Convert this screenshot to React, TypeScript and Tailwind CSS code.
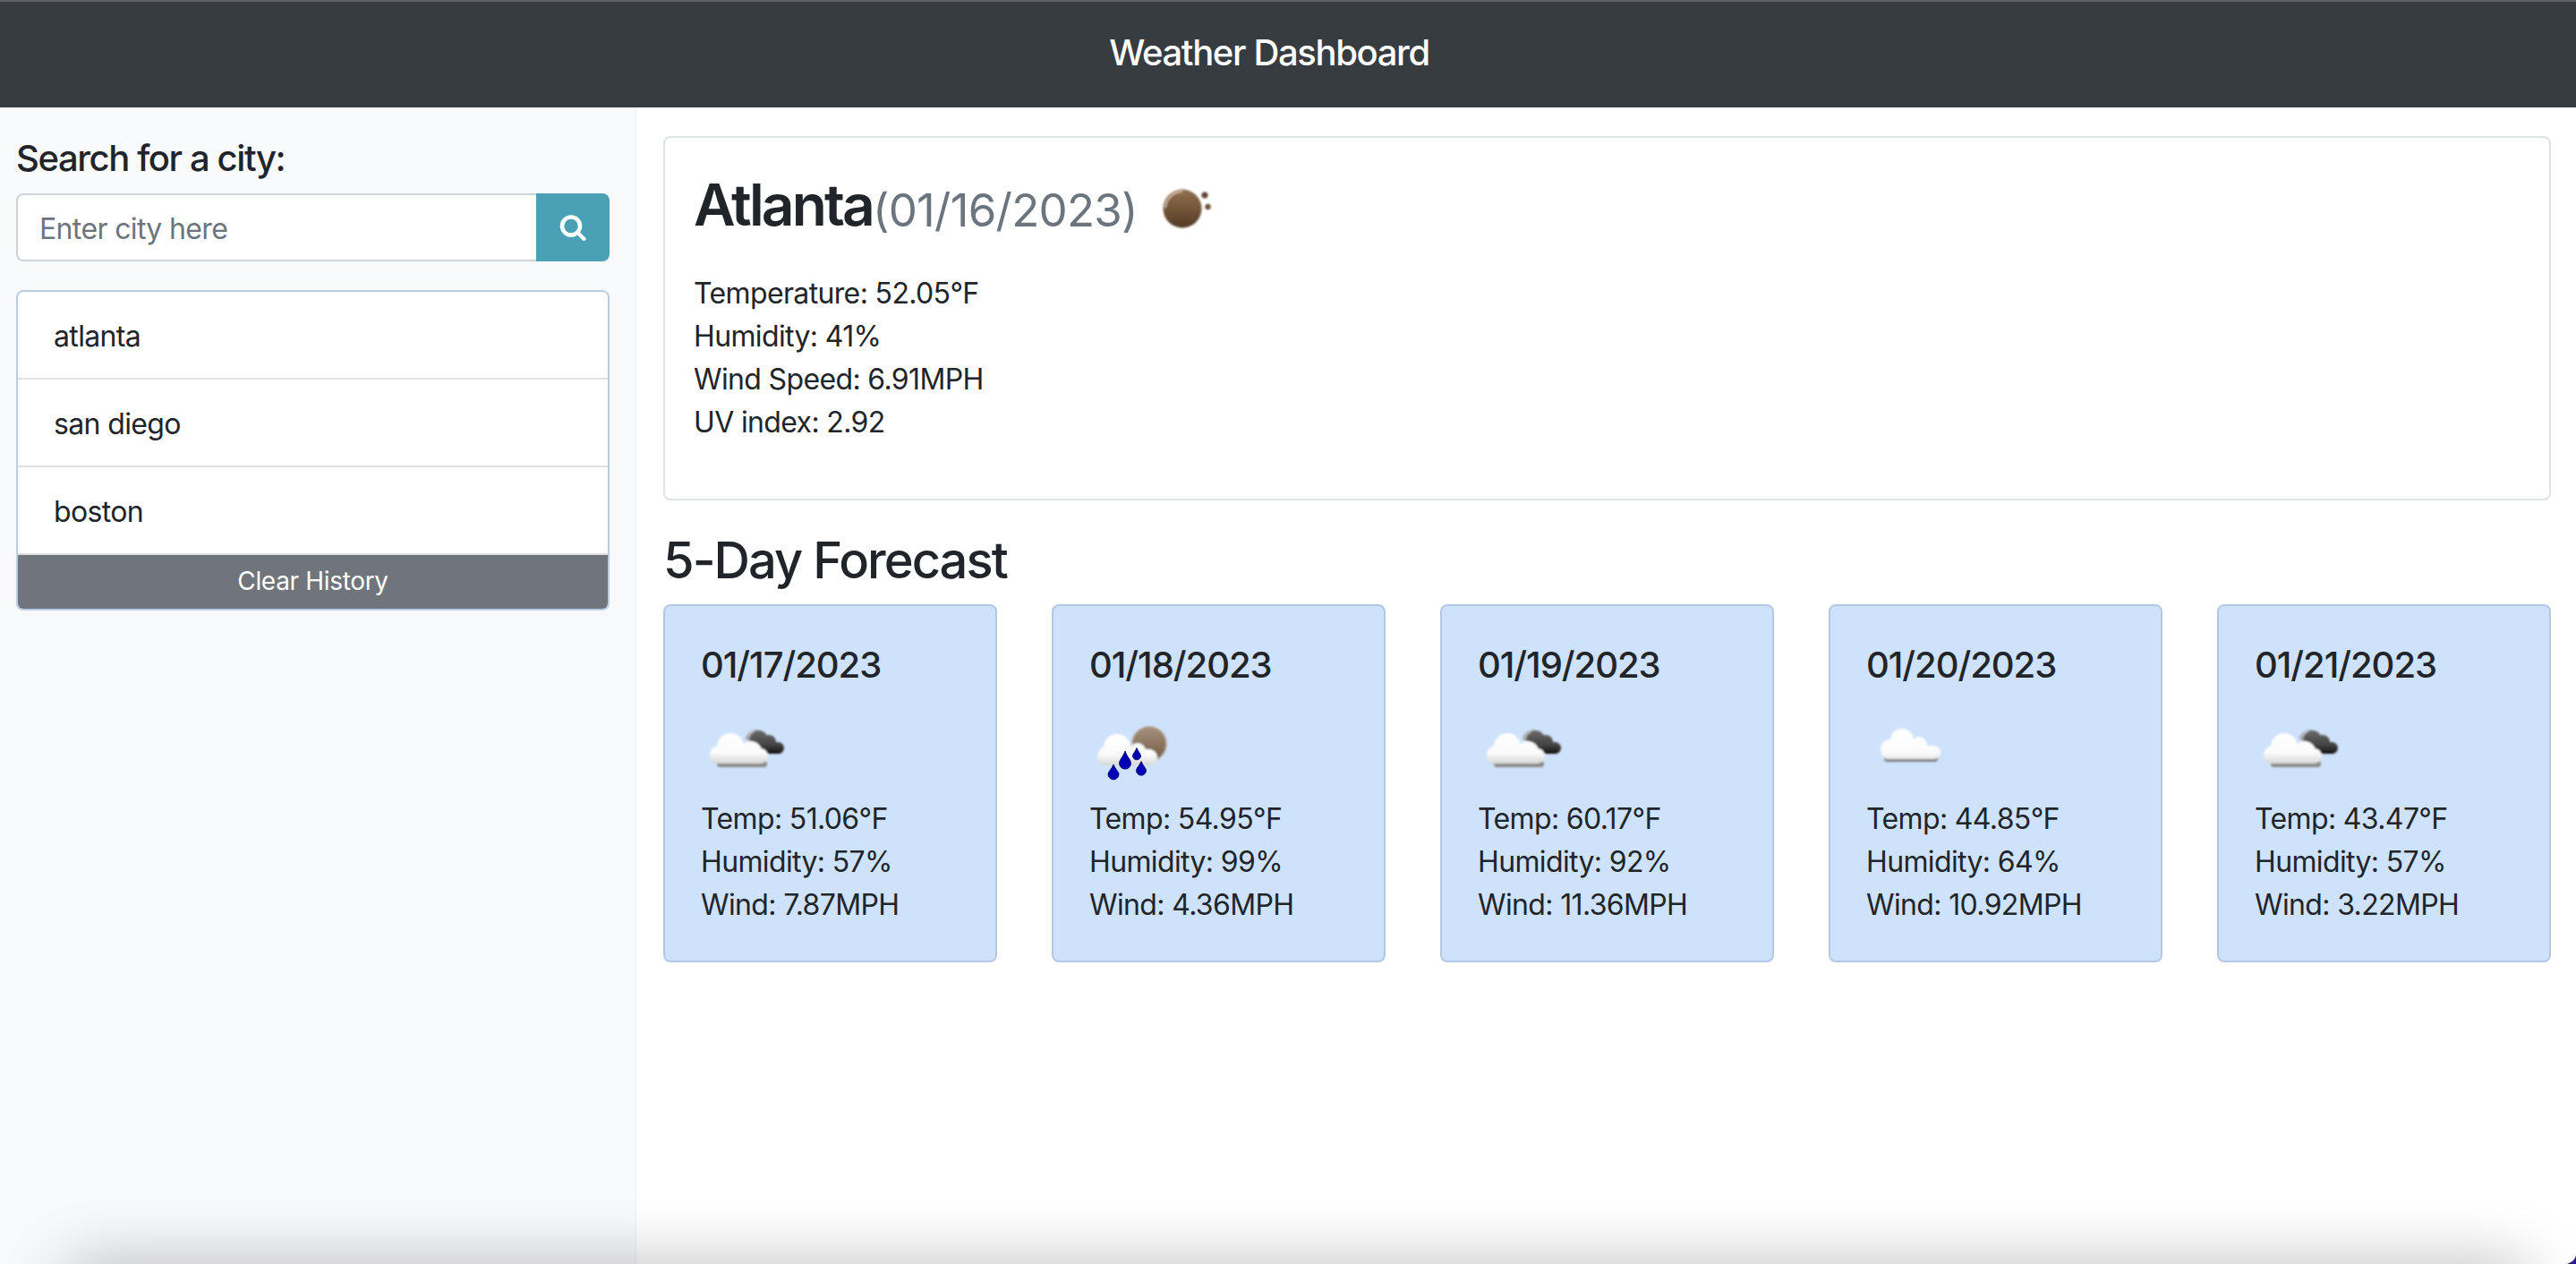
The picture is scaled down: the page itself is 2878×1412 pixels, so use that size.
import React from 'react';

type IconKind = 'broken' | 'rain' | 'cloud';

interface Forecast {
  date: string;
  icon: IconKind;
  temp: string;
  humidity: string;
  wind: string;
}

const forecast: Forecast[] = [
  { date: '01/17/2023', icon: 'broken', temp: '51.06', humidity: '57', wind: '7.87' },
  { date: '01/18/2023', icon: 'rain', temp: '54.95', humidity: '99', wind: '4.36' },
  { date: '01/19/2023', icon: 'broken', temp: '60.17', humidity: '92', wind: '11.36' },
  { date: '01/20/2023', icon: 'cloud', temp: '44.85', humidity: '64', wind: '10.92' },
  { date: '01/21/2023', icon: 'broken', temp: '43.47', humidity: '57', wind: '3.22' },
];

const cities = ['atlanta', 'san diego', 'boston'];

const Drop = ({ x, y, w, h }: { x: number; y: number; w: number; h: number }) => (
  <path
    d={`M${x} ${y - h / 2} C${x + w * 0.2} ${y - h * 0.15} ${x + w / 2} ${y} ${x + w / 2} ${y + h * 0.18} A${w / 2} ${w / 2} 0 0 1 ${x - w / 2} ${y + h * 0.18} C${x - w / 2} ${y} ${x - w * 0.2} ${y - h * 0.15} ${x} ${y - h / 2} Z`}
    fill="#0000b4"
    stroke="#00005a"
    strokeWidth="0.8"
  />
);

const WeatherIcon = ({ kind }: { kind: IconKind }) => {
  const id = `g-${kind}`;
  return (
    <svg width="100" height="100" viewBox="0 0 100 100" className="block">
      <defs>
        <filter id={`${id}-b`} x="-20%" y="-20%" width="140%" height="140%">
          <feGaussianBlur stdDeviation="0.9" />
        </filter>
        <linearGradient id={`${id}-w`} gradientUnits="userSpaceOnUse" x1="0" y1="30" x2="0" y2="64">
          <stop offset="0" stopColor="#ffffff" />
          <stop offset="0.65" stopColor="#fbfbfb" />
          <stop offset="1" stopColor="#d6d6d6" />
        </linearGradient>
        <linearGradient id={`${id}-d`} gradientUnits="userSpaceOnUse" x1="0" y1="26" x2="0" y2="54">
          <stop offset="0" stopColor="#6e6e6e" />
          <stop offset="0.65" stopColor="#404040" />
          <stop offset="1" stopColor="#0c0c0c" />
        </linearGradient>
        <linearGradient id={`${id}-s`} gradientUnits="userSpaceOnUse" x1="0" y1="22" x2="0" y2="60">
          <stop offset="0" stopColor="#a48f7a" />
          <stop offset="1" stopColor="#6f5a45" />
        </linearGradient>
      </defs>
      {kind === 'broken' && (
        <g filter={`url(#${id}-b)`}>
          <path d="M50 36 A12 12 0 0 1 71 31 L62 44 Z" fill="#8a8a8a" />
          <path d="M52 36 A10 10 0 0 1 60 28" fill="none" stroke="#c4c4c4" strokeWidth="1.6" />
          <g fill={`url(#${id}-d)`}>
            <circle cx="65" cy="37" r="10" />
            <circle cx="76" cy="40" r="8" />
            <rect x="55" y="40" width="38" height="13" rx="6.5" />
          </g>
          <path d="M18 62 H74 V65 Q74 68 70 68 H22 Q18 68 18 65 Z" fill="#8b8b8b" />
          <g fill="#ffffff">
            <circle cx="33" cy="45" r="15" fill={`url(#${id}-w)`} />
            <circle cx="20" cy="54" r="10" fill={`url(#${id}-w)`} />
            <circle cx="56" cy="51" r="12" fill={`url(#${id}-w)`} />
            <rect x="10" y="47" width="65" height="17" rx="8.5" fill={`url(#${id}-w)`} />
          </g>
        </g>
      )}
      {kind === 'rain' && (
        <g transform="translate(0 2)">
          <g filter={`url(#${id}-b)`}>
            <circle cx="67" cy="40" r="19" fill={`url(#${id}-s)`} stroke="#b5a290" strokeWidth="1.4" />
            <g fill={`url(#${id}-w)`}>
              <circle cx="31" cy="44" r="15" />
              <circle cx="20" cy="52" r="10" />
              <circle cx="54" cy="48" r="9" />
              <rect x="9" y="46" width="67" height="18" rx="9" />
            </g>
          </g>
          <g filter="blur(0.5px)">
            <Drop x={40} y={58} w={13} h={20} />
            <Drop x={53} y={51} w={9} h={13} />
            <Drop x={58} y={67} w={11} h={15} />
            <Drop x={27} y={71} w={12} h={16} />
          </g>
        </g>
      )}
      {kind === 'cloud' && (
        <g filter={`url(#${id}-b)`} transform="translate(-10 0)">
          <path d="M30 56 H90 V59 Q90 62 86 62 H34 Q30 62 30 59 Z" fill="#7f7f7f" />
          <g fill={`url(#${id}-w)`}>
            <circle cx="50" cy="38" r="13" />
            <circle cx="37" cy="48" r="11" />
            <circle cx="69" cy="43" r="9" />
            <circle cx="84" cy="52" r="7" />
            <rect x="27" y="44" width="66" height="15" rx="7.5" />
          </g>
        </g>
      )}
    </svg>
  );
};

const MoonIcon = () => (
  <svg width="100" height="100" viewBox="0 0 100 100" className="block shrink-0 mt-[1px]">
    <defs>
      <linearGradient id="moon" x1="0" y1="0" x2="0" y2="1">
        <stop offset="0" stopColor="#92704f" />
        <stop offset="1" stopColor="#553a24" />
      </linearGradient>
      <filter id="moon-b" x="-20%" y="-20%" width="140%" height="140%">
        <feGaussianBlur stdDeviation="0.8" />
      </filter>
    </defs>
    <g filter="url(#moon-b)">
      <circle cx="50" cy="46" r="21.5" fill="url(#moon)" />
      <path d="M31 45 A19 19 0 0 1 50 27" fill="none" stroke="#d4bba6" strokeWidth="2" />
      <circle cx="75" cy="31" r="3.6" fill="#5f4430" />
      <circle cx="78.5" cy="44" r="3.2" fill="#6d5039" />
    </g>
  </svg>
);

const App: React.FC = () => {
  return (
    <div className="relative h-[1412px] overflow-hidden bg-white text-[32px] leading-[48px] text-[#212529] font-['Inter','Liberation_Sans',sans-serif] tracking-[-0.02em]">
      <header className="h-[120px] bg-[#373c40] border-t-2 border-t-[#5d6165] flex items-center justify-center pr-[42px] pb-[4px]">
        <span className="text-[40px] leading-[48px] font-medium tracking-[-0.034em] text-white">Weather Dashboard</span>
      </header>

      <div className="flex h-[1292px]">
        <aside className="w-[711px] shrink-0 bg-[#f8f9fb] border-r border-r-[#f0f0f1] pl-[18px] pr-[29px] pt-[32px]">
          <h5 className="text-[40px] leading-[48px] font-medium tracking-[-0.035em] pt-[1px] mb-[15px]">Search for a city:</h5>
          <div className="flex h-[76px]">
            <input
              placeholder="Enter city here"
              readOnly
              className="flex-1 min-w-0 bg-white border-2 border-[#ced4da] border-r-0 rounded-l-[8px] px-[24px] pt-[4px] text-[32px] outline-none placeholder:text-[#6c757d]"
            />
            <button className="w-[82px] bg-[#4aa1b6] rounded-r-[8px] flex items-center justify-center">
              <svg width="30" height="30" viewBox="0 0 30 30" fill="none" stroke="#ffffff">
                <circle cx="13" cy="13.5" r="10" strokeWidth="4.6" />
                <path d="M21 21.5 L27.5 28" strokeWidth="4.2" strokeLinecap="round" />
              </svg>
            </button>
          </div>
          <div className="mt-[32px] border-2 border-[#b9cde5] rounded-[8px] overflow-hidden bg-white">
            {cities.map((city) => (
              <div key={city} className="h-[98px] px-[40px] pt-[3px] flex items-center border-b-2 border-b-[#dfe0e2]">
                {city}
              </div>
            ))}
            <button className="block w-full h-[60px] pb-[2px] bg-[#70757c] text-white text-[28px] leading-[42px] tracking-[-0.012em] text-center">
              Clear History
            </button>
          </div>
        </aside>

        <main className="flex-1 min-w-0 pl-[30px] pr-[28px] pt-[32px]">
          <section className="h-[407px] border-2 border-[#e0e3e6] rounded-[8px] p-[32px]">
            <div className="flex h-[100px] mb-[18px]">
              <h2 className="text-[64px] leading-[86px] font-semibold tracking-[-0.045em]">Atlanta</h2>
              <span className="text-[51px] leading-[97px] tracking-[-0.015em] text-[#6c757d] self-start">(01/16/2023)</span>
              <MoonIcon />
            </div>
            <p>Temperature: 52.05°F</p>
            <p>Humidity: 41%</p>
            <p>Wind Speed: 6.91MPH</p>
            <p>UV index: 2.92</p>
          </section>

          <h3 className="text-[56px] leading-[67px] font-medium tracking-[-0.035em] mt-[34px] mb-[15px]">5-Day Forecast</h3>

          <div className="grid grid-cols-5 gap-[61px]">
            {forecast.map((day) => (
              <div key={day.date} className="h-[400px] bg-[#cfe2fb] border-2 border-[#b3c9e3] rounded-[8px] p-[40px]">
                <h5 className="text-[40px] leading-[48px] font-medium tracking-[-0.026em] pt-[2px] mb-[22px]">{day.date}</h5>
                <WeatherIcon kind={day.icon} />
                <div className="pt-[2px]">
                  <p>Temp: {day.temp}°F</p>
                  <p>Humidity: {day.humidity}%</p>
                  <p>Wind: {day.wind}MPH</p>
                </div>
              </div>
            ))}
          </div>
        </main>
      </div>

      {/* window shadow creeping up from the bottom edge */}
      <div className="absolute left-[70px] right-[50px] top-[1412px] h-[60px] rounded-[40px] shadow-[0_0_70px_rgba(0,0,0,0.28)] pointer-events-none" />
      {/* sliver of desktop in the rounded window corner */}
      <svg width="10" height="10" viewBox="0 0 10 10" className="absolute right-0 bottom-0">
        <path d="M10 0 Q9 7 0 10 H10 Z" fill="#2e1a8c" />
      </svg>
    </div>
  );
};

export default App;
